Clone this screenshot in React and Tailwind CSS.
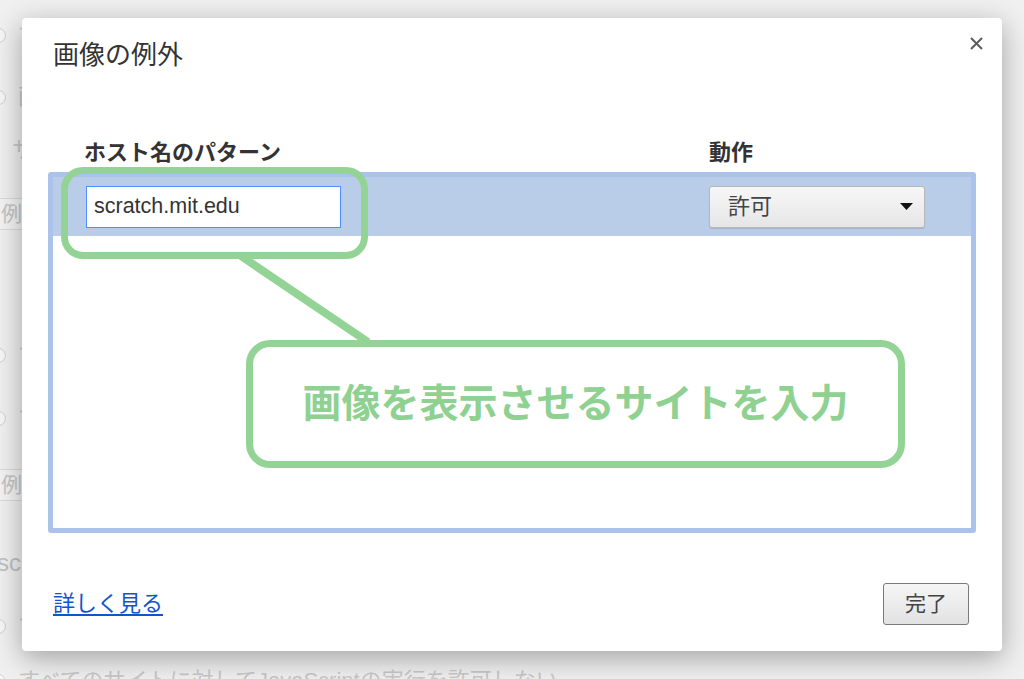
import React from "react";

const FONT = { fontFamily: '"Liberation Sans", "Noto Sans CJK JP", sans-serif' };

function BgRadio({ text, className = "" }) {
  return (
    <div className={"flex h-[24px] items-center gap-[12px] -ml-[9px] " + className}>
      <span className="h-[15px] w-[15px] shrink-0 rounded-full border border-[#d0d0d0] bg-[#f6f6f6]" />
      <span className="whitespace-nowrap text-[22px] leading-[24px] text-[#c8c8c8]">{text}</span>
    </div>
  );
}

function BgButton({ text, className = "" }) {
  return (
    <div className={"flex h-[32px] items-center -ml-[4px] " + className}>
      <span className="whitespace-nowrap rounded-[3px] border border-[#dadada] bg-[#f3f3f3] px-[4px] text-[21px] leading-[30px] text-[#c4c4c4]">
        {text}
      </span>
    </div>
  );
}

export default function App() {
  return (
    <div
      className="relative h-[679px] w-[1024px] overflow-hidden bg-[#f0f0f0]"
      style={FONT}
    >
      {/* faint settings page underneath the dialog */}
      <div className="flex flex-col pt-[23px]">
        <div className="flex w-[22px] flex-col overflow-hidden">
          <BgRadio text="すべての画像を表示する" />
          <BgRadio text="画像を表示しない" className="mt-[38px]" />
          <div className="mt-[29px] flex h-[24px] items-center pl-[12px]">
            <span className="whitespace-nowrap text-[22px] leading-[24px] text-[#c8c8c8]">サイト</span>
          </div>
          <BgButton text="例外を管理" className="mt-[36px]" />
          <BgRadio text="すべてのサイトで許可する" className="mt-[113px]" />
          <BgRadio text="すべてのサイトで許可しない" className="mt-[39px]" />
          <BgButton text="例外を管理" className="mt-[39px]" />
          <div className="mt-[50px] flex h-[24px] items-center -ml-[3px]">
            <span className="whitespace-nowrap text-[24px] leading-[24px] text-[#c0c0c0]">sc</span>
          </div>
          <BgRadio text="すべてのサイトで許可する" className="mt-[39px]" />
        </div>
        <BgRadio text="すべてのサイトに対してJavaScriptの実行を許可しない" className="mt-[31px]" />
      </div>

      {/* dialog */}
      <div className="absolute left-[22px] top-[18px] flex h-[633px] w-[980px] flex-col rounded-[4px] bg-white shadow-[0_7px_28px_rgba(0,0,0,0.33)]">
        <button className="absolute right-[19px] top-[19px] flex h-[13px] w-[13px] items-center justify-center">
          <svg width="13" height="13" viewBox="0 0 13 13">
            <path d="M1 1L12 12M12 1L1 12" stroke="#5c5c5c" strokeWidth="2" />
          </svg>
        </button>

        <div className="pl-[31px] pt-[24px] text-[26px] leading-[26px] text-[#333]">
          画像の例外
        </div>

        <div className="mt-[73px] flex pl-[62px] text-[22px] font-bold leading-[24px] text-[#333]">
          <div className="w-[625px]">ホスト名のパターン</div>
          <div>動作</div>
        </div>

        <div className="ml-[26px] mt-[7px] h-[361px] w-[928px] rounded-[3px] border-[5px] border-[#abc2ea] bg-white">
          <div className="flex h-[59px] items-center justify-between bg-[#b9cde8] pl-[33px] pr-[46px]">
            <div className="flex h-[42px] w-[255px] items-center border border-[#4d90fe] bg-white pl-[7px] text-[21.5px] text-[#333]">
              scratch.mit.edu
            </div>
            <div className="flex h-[42px] w-[216px] items-center justify-between rounded-[3px] border border-[#b8b8b8] bg-gradient-to-b from-[#f7f7f7] to-[#e6e6e6] pl-[18px] pr-[11px] text-[22px] text-[#444] shadow-[0_1px_1px_rgba(0,0,0,0.12)]">
              <span>許可</span>
              <svg width="13" height="7" viewBox="0 0 13 7">
                <path d="M0 0H13L6.5 7Z" fill="#111" />
              </svg>
            </div>
          </div>
        </div>

        <div className="mt-[50px] flex h-[42px] items-center justify-between pl-[31px] pr-[33px]">
          <a className="text-[22px] leading-[26px] text-[#1155cc] underline underline-offset-[3px]">
            詳しく見る
          </a>
          <button className="flex h-[42px] w-[86px] items-center justify-center rounded-[3px] border border-[#7a7a7a] bg-gradient-to-b from-[#f6f6f6] to-[#e2e2e2] text-[21px] text-[#444]">
            完了
          </button>
        </div>

        {/* annotation overlay */}
        <svg
          className="pointer-events-none absolute left-0 top-0"
          width="980"
          height="633"
          viewBox="0 0 980 633"
        >
          <line x1="219" y1="238" x2="346" y2="324" stroke="#93d396" strokeWidth="8" />
        </svg>
        <div className="pointer-events-none absolute left-[39px] top-[149px] h-[92px] w-[307px] rounded-[22px] border-[7px] border-[#93d396]" />
        <div className="pointer-events-none absolute left-[224px] top-[322px] flex h-[128px] w-[659px] items-center justify-center rounded-[24px] border-[7px] border-[#93d396] bg-white">
          <span className="text-[39px] font-bold leading-[44px] text-[#8ed191]">
            画像を表示させるサイトを入力
          </span>
        </div>
      </div>
    </div>
  );
}
